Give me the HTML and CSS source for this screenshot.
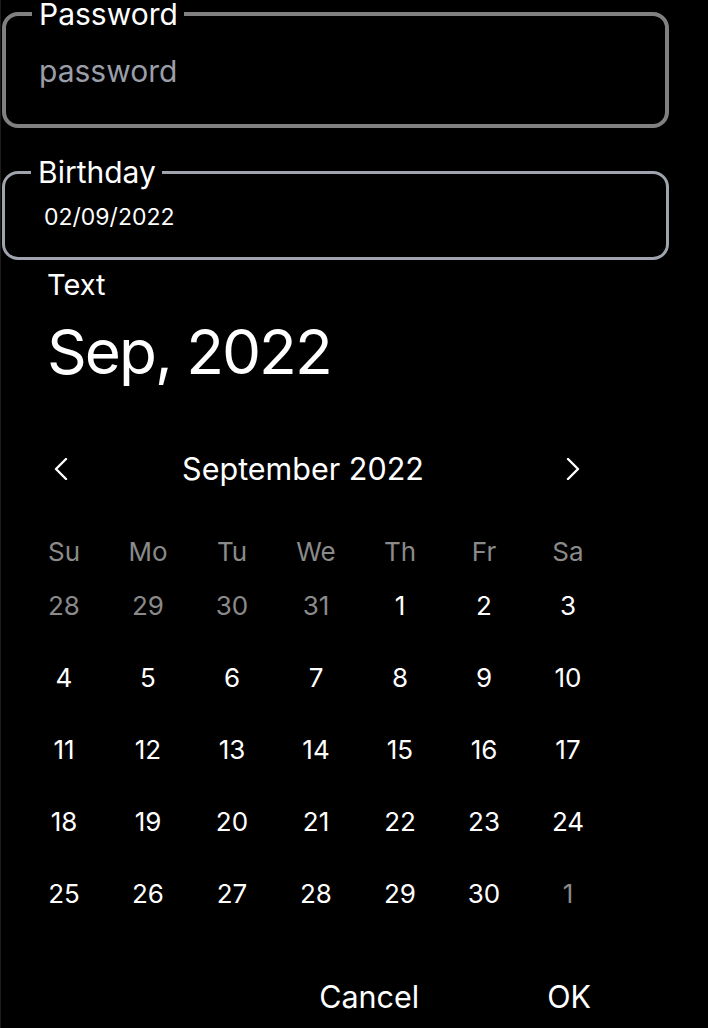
FILE: index.html
```html
<!DOCTYPE html>
<html lang="en">
<head>
    <meta charset="UTF-8">
    <meta name="viewport" content="width=device-width, initial-scale=1.0">
    <title>Birthday Picker</title>
    <link rel="stylesheet" href="styles.css">
</head>
<body>
    <form class="form">
        <fieldset class="field field-password">
            <legend>Password</legend>
            <input type="password" class="field-input" placeholder="password" aria-label="Password">
        </fieldset>
        <fieldset class="field field-date">
            <legend>Birthday</legend>
            <div class="field-value">02/09/2022</div>
        </fieldset>
    </form>

    <div class="picker">
        <div class="picker-label">Text</div>
        <div class="picker-title">Sep, 2022</div>

        <div class="month-nav">
            <button class="nav-btn" aria-label="Previous month">
                <svg width="14" height="22" viewBox="0 0 14 22"><polyline points="12,1 2,11 12,21" fill="none" stroke="#fff" stroke-width="2.4" stroke-linecap="round" stroke-linejoin="round"/></svg>
            </button>
            <div class="month-name">September 2022</div>
            <button class="nav-btn" aria-label="Next month">
                <svg width="14" height="22" viewBox="0 0 14 22"><polyline points="2,1 12,11 2,21" fill="none" stroke="#fff" stroke-width="2.4" stroke-linecap="round" stroke-linejoin="round"/></svg>
            </button>
        </div>

        <div class="weekdays">
            <span>Su</span><span>Mo</span><span>Tu</span><span>We</span><span>Th</span><span>Fr</span><span>Sa</span>
        </div>
        <div class="days" id="days"></div>

        <div class="actions">
            <button class="action-btn">Cancel</button>
            <button class="action-btn">OK</button>
        </div>
    </div>

    <script>
        const days = document.getElementById('days');
        const cells = [];
        [28, 29, 30, 31].forEach(d => cells.push({ d, muted: true }));
        for (let d = 1; d <= 30; d++) cells.push({ d, muted: false });
        cells.push({ d: 1, muted: true });

        cells.forEach(c => {
            const span = document.createElement('span');
            span.className = c.muted ? 'day muted' : 'day';
            span.textContent = c.d;
            days.appendChild(span);
        });
    </script>
</body>
</html>
```

FILE: styles.css
```css
body {
    margin: 0;
    background-color: #000;
    color: #fff;
    font-family: Inter, 'Noto Sans', sans-serif;
    border-left: 1px solid #1c1c1c;
    min-height: 100vh;
    box-sizing: border-box;
    overflow: hidden;
}
.form {
    margin: 0;
}
.field {
    box-sizing: border-box;
    width: 667px;
    margin: 0 0 0 1px;
    padding: 0 26px;
    border-radius: 16px;
    min-width: 0;
}
.field legend {
    font-size: 30px;
    line-height: 28px;
    padding: 0 6px 0 7px;
    color: #fff;
}
.field-password {
    border: 4px solid #808080;
    padding-top: 26px;
    padding-bottom: 36px;
}
.field-input {
    display: block;
    width: 100%;
    box-sizing: border-box;
    background: transparent;
    border: none;
    outline: none;
    padding: 0 0 0 7px;
    margin: 0;
    height: 34px;
    font-family: inherit;
    font-size: 30px;
    color: #fff;
}
.field-input::placeholder {
    color: #9a9ea8;
}
.field-date {
    margin-top: 30px;
    border: 3px solid #a0a4ae;
    padding-top: 16px;
    padding-bottom: 25px;
}
.field-value {
    font-size: 23px;
    line-height: 30px;
    padding-left: 13px;
}
.picker {
    padding-top: 8px;
}
.picker-label {
    padding-left: 46px;
    font-size: 29px;
    line-height: 34px;
}
.picker-title {
    padding-left: 46px;
    margin-top: 12px;
    font-size: 62px;
    line-height: 76px;
    letter-spacing: -2px;
}
.month-nav {
    display: grid;
    grid-template-columns: 42px 470px 42px;
    align-items: center;
    margin: 59px 0 0 39px;
    height: 40px;
}
.nav-btn {
    background: none;
    border: none;
    padding: 0;
    display: flex;
    justify-content: center;
    align-items: center;
    cursor: pointer;
}
.month-name {
    text-align: center;
    padding-right: 28px;
    font-size: 30.5px;
    line-height: 40px;
}
.weekdays,
.days {
    display: grid;
    grid-template-columns: repeat(7, 84px);
    margin-left: 21px;
    text-align: center;
    font-size: 26px;
}
.weekdays {
    margin-top: 45px;
    line-height: 36px;
    color: #8a8a8a;
}
.day {
    line-height: 72px;
}
.day.muted {
    color: #8a8a8a;
}
.actions {
    display: flex;
    justify-content: flex-end;
    gap: 128px;
    padding-right: 117px;
    margin-top: 45px;
}
.action-btn {
    background: none;
    border: none;
    padding: 0;
    color: #fff;
    font-family: inherit;
    font-size: 30.5px;
    line-height: 44px;
    cursor: pointer;
}
```
